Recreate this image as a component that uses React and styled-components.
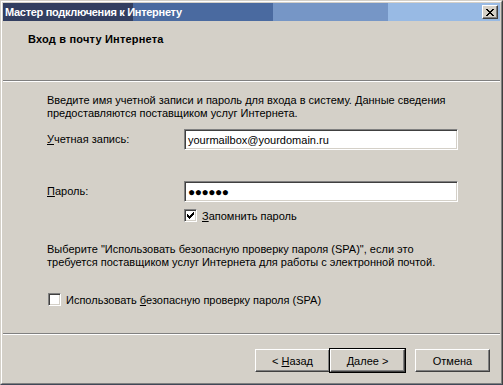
import styled, { createGlobalStyle } from 'styled-components';

const GlobalStyle = createGlobalStyle`
  html, body {
    margin: 0;
    padding: 0;
    background: #3a4a6a;
  }
  body {
    font-family: "Liberation Sans", Arial, sans-serif;
    font-size: 11px;
    color: #000;
  }
`;

const Window = styled.div`
  width: 503px;
  height: 385px;
  box-sizing: border-box;
  background: #d4d0c8;
  border-top: 1px solid #d4d0c8;
  border-left: 1px solid #d4d0c8;
  border-right: 1px solid #404040;
  border-bottom: 1px solid #404858;
  display: flex;
  flex-direction: column;
  overflow: hidden;
`;

const Frame = styled.div`
  flex: 1;
  display: flex;
  flex-direction: column;
  border-top: 1px solid #fff;
  border-left: 1px solid #fff;
  border-right: 1px solid #808080;
  border-bottom: 1px solid #808080;
  padding: 1px;
`;

const TitleBar = styled.div`
  height: 18px;
  display: flex;
  align-items: center;
  justify-content: space-between;
  padding: 0 2px 0 2px;
  background: linear-gradient(
    to right,
    #323e60 0 130px,
    #4a6aa0 130px 270px,
    #7696c6 270px 385px,
    #98bae4 385px
  );
`;

const Title = styled.span`
  color: #fff;
  font-weight: bold;
  font-size: 11px;
  letter-spacing: -0.3px;
`;

const CloseButton = styled.div`
  width: 16px;
  height: 14px;
  box-sizing: border-box;
  background: #d4d0c8;
  border-top: 1px solid #fff;
  border-left: 1px solid #fff;
  border-right: 1px solid #404040;
  border-bottom: 1px solid #404040;
  box-shadow: inset -1px -1px 0 #808080;
  display: flex;
  align-items: center;
  justify-content: center;
`;

const Header = styled.div`
  height: 59px;
  box-sizing: border-box;
  padding: 12px 0 0 25px;
`;

const HeaderTitle = styled.div`
  font-weight: bold;
  font-size: 11px;
  letter-spacing: 0.2px;
`;

const Separator = styled.div`
  height: 0;
  border-top: 1px solid #808080;
  border-bottom: 1px solid #fff;
`;

const Body = styled.div`
  flex: 1;
  padding: 12px 0 0 44px;
  display: flex;
  flex-direction: column;
`;

const Paragraph = styled.p`
  margin: ${(p) => p.$top || 0}px 0 0 0;
  line-height: 13px;
  width: ${(p) => p.$width}px;
`;

const FormGrid = styled.div`
  display: grid;
  grid-template-columns: 137px 274px;
  margin-top: ${(p) => p.$top}px;
  align-items: center;
`;

const Label = styled.label`
  line-height: 13px;
`;

const Field = styled.div`
  height: 21px;
  box-sizing: border-box;
  background: #fff;
  border-top: 1px solid #808080;
  border-left: 1px solid #808080;
  border-right: 1px solid #fff;
  border-bottom: 1px solid #fff;
  box-shadow: inset 1px 1px 0 #404040, inset -1px -1px 0 #d4d0c8;
  padding: 0 3px;
  display: flex;
  align-items: center;
  font-size: ${(p) => (p.$secret ? '12px' : '11px')};
  letter-spacing: ${(p) => (p.$secret ? '-0.5px' : '0')};
`;

const CheckRow = styled.div`
  display: flex;
  align-items: center;
  gap: 5px;
  margin-top: ${(p) => p.$top}px;
  margin-left: ${(p) => p.$left || 0}px;
`;

const Box = styled.span`
  width: 13px;
  height: 13px;
  box-sizing: border-box;
  background: #fff;
  border-top: 1px solid #808080;
  border-left: 1px solid #808080;
  border-right: 1px solid #fff;
  border-bottom: 1px solid #fff;
  box-shadow: inset 1px 1px 0 #404040, inset -1px -1px 0 #d4d0c8;
  display: flex;
  align-items: center;
  justify-content: center;
`;

const Footer = styled.div`
  height: 47px;
  box-sizing: border-box;
  display: flex;
  padding: 14px 0 0 252px;
`;

const Button = styled.div`
  width: 75px;
  height: 23px;
  box-sizing: border-box;
  display: flex;
  align-items: center;
  justify-content: center;
  background: #d4d0c8;
  border-top: 1px solid #fff;
  border-left: 1px solid #fff;
  border-right: 1px solid #404040;
  border-bottom: 1px solid #404040;
  box-shadow: inset -1px -1px 0 #808080;
  margin-left: ${(p) => p.$gap || 0}px;
  ${(p) =>
    p.$default &&
    `
    box-shadow: inset -1px -1px 0 #808080, 0 0 0 1px #000;
  `}
`;

const Check = () => (
  <svg width="7" height="7" viewBox="0 0 7 7">
    <path
      d="M0 2h1v1h1v1h1v-1h1v-1h1v-1h1v-1h1v3h-1v1h-1v1h-1v1h-1v1h-1v-1h-1v-1h-1z"
      fill="#000"
    />
  </svg>
);

const CloseIcon = () => (
  <svg width="8" height="7" viewBox="0 0 8 7">
    <path
      d="M0 0h2v1h1v1h2V1h1V0h2v1H7v1H6v1H5v1h1v1h1v1h1v1H6V6H5V5H3v1H2v1H0V6h1V5h1V4h1V3H2V2H1V1H0z"
      fill="#000"
    />
  </svg>
);

const U = styled.span`
  text-decoration: underline;
  text-underline-offset: 1px;
`;

export default function App() {
  return (
    <>
      <GlobalStyle />
      <Window>
        <Frame>
          <TitleBar>
            <Title>Мастер подключения к Интернету</Title>
            <CloseButton>
              <CloseIcon />
            </CloseButton>
          </TitleBar>
          <Header>
            <HeaderTitle>Вход в почту Интернета</HeaderTitle>
          </Header>
          <Separator />
          <Body>
            <Paragraph $width={432}>
              Введите имя учетной записи и пароль для входа в систему. Данные сведения
              предоставляются поставщиком услуг Интернета.
            </Paragraph>
            <FormGrid $top={9}>
              <Label>
                <U>У</U>четная запись:
              </Label>
              <Field>yourmailbox@yourdomain.ru</Field>
            </FormGrid>
            <FormGrid $top={31}>
              <Label>
                <U>П</U>ароль:
              </Label>
              <Field $secret>●●●●●●</Field>
            </FormGrid>
            <CheckRow $top={7} $left={137}>
              <Box>
                <Check />
              </Box>
              <span>
                <U>З</U>апомнить пароль
              </span>
            </CheckRow>
            <Paragraph $top={21} $width={410}>
              Выберите "Использовать безопасную проверку пароля (SPA)", если это
              требуется поставщиком услуг Интернета для работы с электронной почтой.
            </Paragraph>
            <CheckRow $top={24} $left={1}>
              <Box />
              <span>
                Использовать <U>б</U>езопасную проверку пароля (SPA)
              </span>
            </CheckRow>
          </Body>
          <Separator />
          <Footer>
            <Button>
              &lt;&nbsp;<U>Н</U>азад
            </Button>
            <Button $default>
              <U>Д</U>алее &gt;
            </Button>
            <Button $gap={10}>Отмена</Button>
          </Footer>
        </Frame>
      </Window>
    </>
  );
}
